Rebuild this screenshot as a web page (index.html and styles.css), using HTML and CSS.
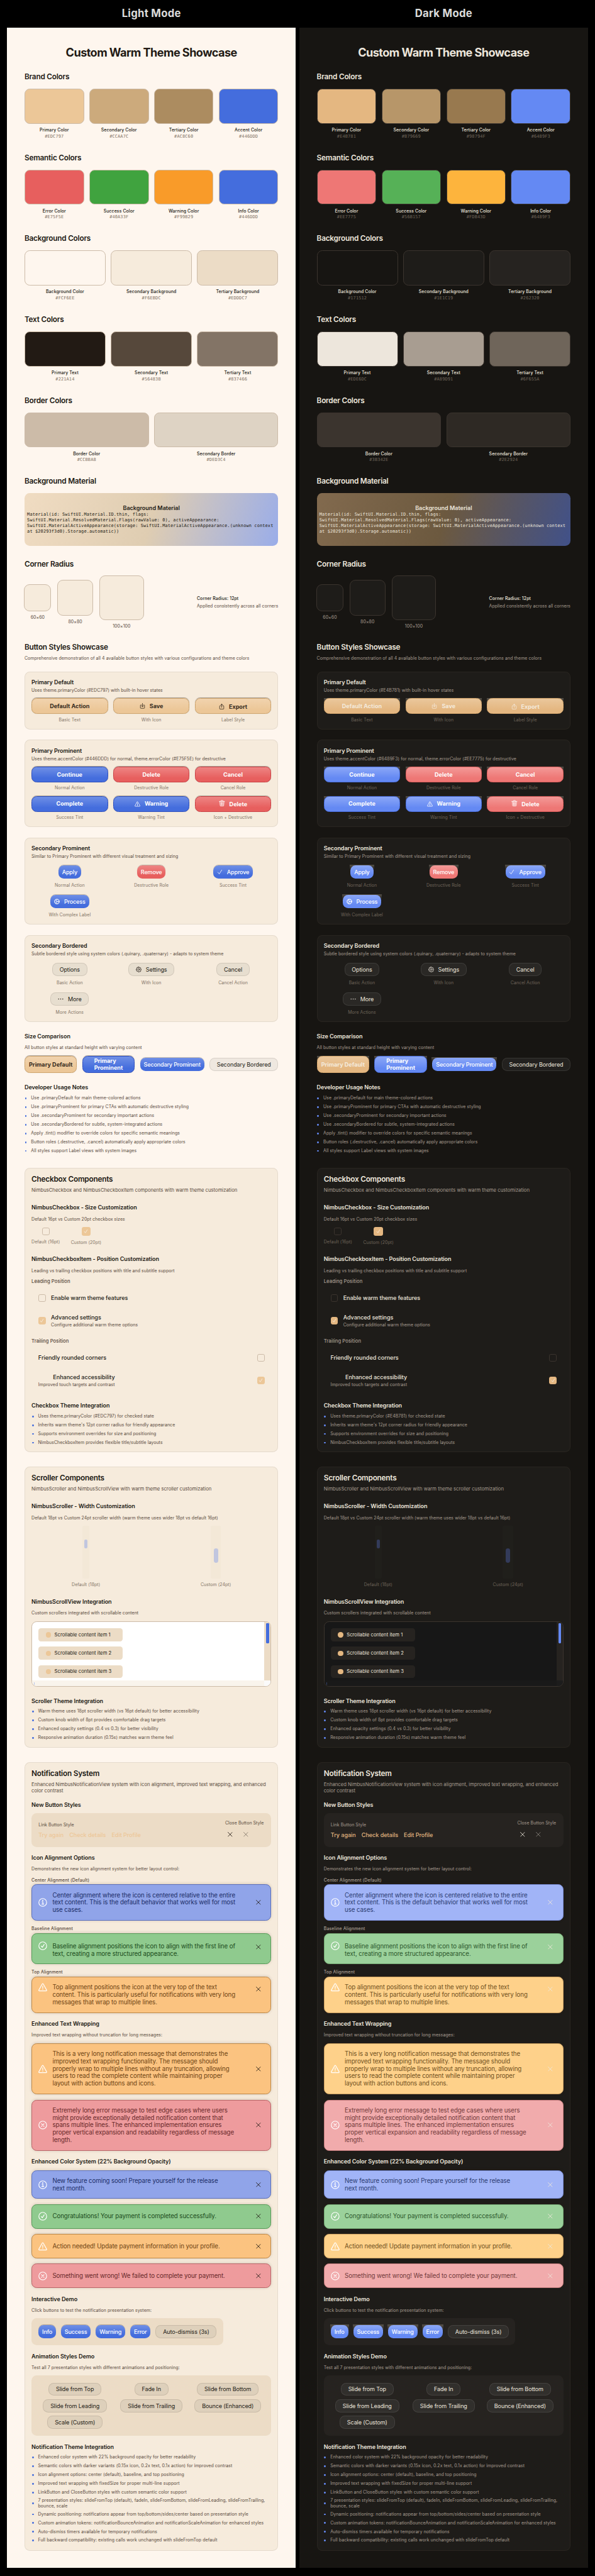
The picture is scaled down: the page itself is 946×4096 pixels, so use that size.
FILE: index.html
```html
<!DOCTYPE html>
<html lang="en">
<head>
<meta charset="utf-8">
<title>Custom Warm Theme Showcase</title>
<link rel="stylesheet" href="styles.css">
</head>
<body>
<svg class="sprite" aria-hidden="true">
  <symbol id="i-save" viewBox="0 0 16 16"><path d="M5.2 5.2H3.4a1.2 1.2 0 0 0-1.2 1.2v7a1.2 1.2 0 0 0 1.2 1.2h9.2a1.2 1.2 0 0 0 1.2-1.2v-7a1.2 1.2 0 0 0-1.2-1.2h-1.8M8 .8v9.4M5.2 7.6 8 10.4l2.8-2.8"/></symbol>
  <symbol id="i-export" viewBox="0 0 16 16"><path d="M5.2 5.6H3.4a1.2 1.2 0 0 0-1.2 1.2v7a1.2 1.2 0 0 0 1.2 1.2h9.2a1.2 1.2 0 0 0 1.2-1.2v-7a1.2 1.2 0 0 0-1.2-1.2h-1.8M8 10.4V1M5.2 3.6 8 .8l2.8 2.8"/></symbol>
  <symbol id="i-warn" viewBox="0 0 16 16"><path d="M7.1 2.1 1 12.6a1.1 1.1 0 0 0 .9 1.6h12.2a1.1 1.1 0 0 0 .9-1.6L8.9 2.1a1 1 0 0 0-1.8 0zM8 6v4M8 11.5v.9"/></symbol>
  <symbol id="i-trash" viewBox="0 0 16 16"><path d="M1 3.2h14M5.4 3V1.6a.9.9 0 0 1 .9-.9h3.4a.9.9 0 0 1 .9.9V3M2.6 3.4l.8 10.6a1.2 1.2 0 0 0 1.2 1.2h6.8a1.2 1.2 0 0 0 1.2-1.2l.8-10.6M5.7 5.6l.3 7.2M8 5.6v7.2M10.3 5.6l-.3 7.2"/></symbol>
  <symbol id="i-check" viewBox="0 0 16 16"><path d="M2.4 8.8 6.4 13.6 13.4 2.4"/></symbol>
  <symbol id="i-process" viewBox="0 0 16 16"><circle cx="8" cy="8" r="6"/><circle cx="8" cy="8" r="7.2" stroke-dasharray="1.4 2.37"/><path d="M8.8 8H14M7.6 7.3 5 2.8M7.6 8.7 5 13.2"/><circle cx="7.8" cy="8" r="1"/></symbol>
  <symbol id="i-gear" viewBox="0 0 16 16"><path d="M6.9 1h2.2l.4 1.9 1.3.6 1.7-1.1 1.5 1.6-1 1.6.5 1.3 1.9.5v2.1l-1.9.4-.6 1.4 1.1 1.6-1.6 1.6-1.6-1.1-1.3.6L9.1 15H6.9l-.4-1.9-1.4-.6-1.6 1.1-1.6-1.6 1.1-1.6-.6-1.4L.9 9.100V7l1.900-.4.6-1.400-1.100-1.600 1.600-1.600 1.600 1.100 1-.5z"/><circle cx="8" cy="8" r="2.5"/></symbol>
  <symbol id="i-more" viewBox="0 0 16 16"><g fill="currentColor" stroke="none"><circle cx="2.2" cy="8" r="1.35"/><circle cx="8" cy="8" r="1.35"/><circle cx="13.8" cy="8" r="1.35"/></g></symbol>
  <symbol id="i-x" viewBox="0 0 16 16"><path d="M1 1l14 14M15 1 1 15"/></symbol>
  <symbol id="i-info" viewBox="0 0 24 24"><circle cx="12" cy="12" r="10.7"/><path d="M10 10.300h2.400v6.200M9.500 16.700h5.400"/><circle cx="12" cy="7" r=".7" fill="currentColor"/></symbol>
  <symbol id="i-ok" viewBox="0 0 24 24"><circle cx="12" cy="12" r="10.7"/><path d="M7.900 12.600l2.900 3.600 5.300-8.200"/></symbol>
  <symbol id="i-alert" viewBox="0 0 24 24"><path d="M10.700 2.700 1.300 19.600a1.500 1.500 0 0 0 1.300 2.200h18.800a1.500 1.500 0 0 0 1.300-2.200L13.300 2.700a1.500 1.500 0 0 0-2.600 0zM12 8.500v6.200M12 17.600v.5"/></symbol>
  <symbol id="i-fail" viewBox="0 0 24 24"><circle cx="12" cy="12" r="10.7"/><path d="M8.400 8.400l7.200 7.200M15.600 8.400l-7.200 7.200"/></symbol>
</svg>

<div class="board">
  <div class="mode"><div class="mode-name">Light Mode</div><main class="panel light"></main></div>
  <div class="mode"><div class="mode-name">Dark Mode</div><main class="panel dark"></main></div>
</div>

<template id="showcase">
  <h1 class="title">Custom Warm Theme Showcase</h1>

  <section class="section"><h2 class="h2">Brand Colors</h2><div class="swatches">
    <div class="swatch" data-token="primary">Primary Color</div><div class="swatch" data-token="secondary">Secondary Color</div><div class="swatch" data-token="tertiary">Tertiary Color</div><div class="swatch" data-token="accent">Accent Color</div></div></section>
  <section class="section"><h2 class="h2">Semantic Colors</h2><div class="swatches">
    <div class="swatch" data-token="error">Error Color</div><div class="swatch" data-token="success">Success Color</div><div class="swatch" data-token="warning">Warning Color</div><div class="swatch" data-token="accent">Info Color</div></div></section>
  <section class="section"><h2 class="h2">Background Colors</h2><div class="swatches">
    <div class="swatch" data-token="bg">Background Color</div><div class="swatch" data-token="bg2">Secondary Background</div><div class="swatch" data-token="bg3">Tertiary Background</div></div></section>
  <section class="section"><h2 class="h2">Text Colors</h2><div class="swatches">
    <div class="swatch" data-token="text">Primary Text</div><div class="swatch" data-token="text2">Secondary Text</div><div class="swatch" data-token="text3">Tertiary Text</div></div></section>
  <section class="section"><h2 class="h2">Border Colors</h2><div class="swatches">
    <div class="swatch" data-token="border">Border Color</div><div class="swatch" data-token="border2">Secondary Border</div></div></section>

  <section class="section"><h2 class="h2">Background Material</h2>
    <div class="material"><div class="material-title">Background Material</div>
      <div class="material-code">Material(id: SwiftUI.Material.ID.thin, flags:<br>SwiftUI.Material.ResolvedMaterial.Flags(rawValue: 0), activeAppearance:<br>SwiftUI.MaterialActiveAppearance(storage: SwiftUI.MaterialActiveAppearance.(unknown context<br>at $20293f3d0).Storage.automatic))</div></div></section>

  <section class="section"><h2 class="h2">Corner Radius</h2>
    <div class="radii">
      <div class="radius s60"><i></i>60×60</div><div class="radius s80"><i></i>80×80</div><div class="radius s100"><i></i>100×100</div>
      <div class="radius-note"><b>Corner Radius: 12pt</b><span>Applied consistently across all corners</span></div>
    </div></section>

  <h2 class="h2">Button Styles Showcase</h2>
  <p class="note gap8">Comprehensive demonstration of all 4 available button styles with various configurations and theme colors</p>

  <section class="card gap24">
    <h3 class="h3 down">Primary Default</h3>
    <p class="note gap4">Uses theme.primaryColor (<span data-hex="primary"></span>) with built-in hover states</p>
    <div class="grid3">
      <div class="cell"><button class="btn warm">Default Action</button>Basic Text</div>
      <div class="cell"><button class="btn warm"><svg><use href="#i-save"/></svg>Save</button>With Icon</div>
      <div class="cell"><button class="btn warm low"><svg><use href="#i-export"/></svg>Export</button>Label Style</div>
    </div>
  </section>
  <section class="card gap24">
    <h3 class="h3 down">Primary Prominent</h3>
    <p class="note gap4">Uses theme.accentColor (<span data-hex="accent"></span>) for normal, theme.errorColor (<span data-hex="error"></span>) for destructive</p>
    <div class="grid3">
      <div class="cell"><button class="btn blue">Continue</button>Normal Action</div>
      <div class="cell"><button class="btn red">Delete</button>Destructive Role</div>
      <div class="cell"><button class="btn red">Cancel</button>Cancel Role</div>
      <div class="cell"><button class="btn blue">Complete</button>Success Tint</div>
      <div class="cell"><button class="btn blue"><svg><use href="#i-warn"/></svg>Warning</button>Warning Tint</div>
      <div class="cell"><button class="btn red low"><svg class="tall"><use href="#i-trash"/></svg>Delete</button>Icon + Destructive</div>
    </div>
  </section>
  <section class="card gap24">
    <h3 class="h3 down">Secondary Prominent</h3>
    <p class="note gap4">Similar to Primary Prominent with different visual treatment and sizing</p>
    <div class="grid3">
      <div class="cell"><button class="pill blue">Apply</button>Normal Action</div>
      <div class="cell"><button class="pill red">Remove</button>Destructive Role</div>
      <div class="cell"><button class="pill blue"><svg><use href="#i-check"/></svg>Approve</button>Success Tint</div>
      <div class="cell"><button class="pill blue"><svg><use href="#i-process"/></svg>Process</button>With Complex Label</div>
    </div>
  </section>
  <section class="card gap24">
    <h3 class="h3 down">Secondary Bordered</h3>
    <p class="note gap4">Subtle bordered style using system colors (.quinary, .quaternary) - adapts to system theme</p>
    <div class="grid3">
      <div class="cell"><button class="pill line">Options</button>Basic Action</div>
      <div class="cell"><button class="pill line"><svg><use href="#i-gear"/></svg>Settings</button>With Icon</div>
      <div class="cell"><button class="pill line">Cancel</button>Cancel Action</div>
      <div class="cell"><button class="pill line"><svg><use href="#i-more"/></svg>More</button>More Actions</div>
    </div>
  </section>

  <h3 class="h3 down gap24">Size Comparison</h3>
  <p class="note gap12">All button styles at standard height with varying content</p>
  <div class="sizes">
    <button class="btn warm">Primary Default</button>
    <button class="btn blue"><span>Primary<br>Prominent</span></button>
    <button class="pill blue">Secondary Prominent</button>
    <button class="pill line">Secondary Bordered</button>
  </div>

  <h3 class="h3 down gap24">Developer Usage Notes</h3>
  <ul class="list down">
    <li>Use .primaryDefault for main theme-colored actions</li>
    <li>Use .primaryProminent for primary CTAs with automatic destructive styling</li>
    <li>Use .secondaryProminent for secondary important actions</li>
    <li>Use .secondaryBordered for subtle, system-integrated actions</li>
    <li>Apply .tint() modifier to override colors for specific semantic meanings</li>
    <li>Button roles (.destructive, .cancel) automatically apply appropriate colors</li>
    <li>All styles support Label views with system images</li>
  </ul>

  <section class="card gap32">
    <h2 class="h2">Checkbox Components</h2>
    <p class="lead">NimbusCheckbox and NimbusCheckboxItem components with warm theme customization</p>
    <h3 class="h3 gap24">NimbusCheckbox - Size Customization</h3>
    <p class="note gap12">Default 16pt vs Custom 20pt checkbox sizes</p>
    <div class="checks">
      <div class="check-demo"><i class="check"></i>Default (16pt)</div>
      <div class="check-demo"><i class="check on big"><svg><use href="#i-check"/></svg></i>Custom (20pt)</div>
    </div>
    <h3 class="h3 gap24">NimbusCheckboxItem - Position Customization</h3>
    <p class="note gap12">Leading vs trailing checkbox positions with title and subtitle support</p>
    <p class="sub gap12">Leading Position</p>
    <div class="item first"><i class="check"></i><div><b>Enable warm theme features</b></div></div>
    <div class="item"><i class="check on"><svg><use href="#i-check"/></svg></i><div><b>Advanced settings</b><span>Configure additional warm theme options</span></div></div>
    <p class="sub gap11">Trailing Position</p>
    <div class="item first trailing"><div><b>Friendly rounded corners</b></div><i class="check"></i></div>
    <div class="item trailing"><div><b>Enhanced accessibility</b><span>Improved touch targets and contrast</span></div><i class="check on"><svg><use href="#i-check"/></svg></i></div>
    <h3 class="h3 down gap18">Checkbox Theme Integration</h3>
    <ul class="list down">
      <li><span>Uses theme.primaryColor (<span data-hex="primary"></span>) for checked state</span></li>
      <li>Inherits warm theme's 12pt corner radius for friendly appearance</li>
      <li>Supports environment overrides for size and positioning</li>
      <li>NimbusCheckboxItem provides flexible title/subtitle layouts</li>
    </ul>
  </section>

  <section class="card gap32">
    <h2 class="h2">Scroller Components</h2>
    <p class="lead">NimbusScroller and NimbusScrollView with warm theme scroller customization</p>
    <h3 class="h3 gap24">NimbusScroller - Width Customization</h3>
    <p class="note gap12">Default 18pt vs Custom 24pt scroller width (warm theme uses wider 18pt vs default 16pt)</p>
    <div class="scrollers">
      <div class="scroller"><div class="track"><i></i></div>Default (18pt)</div>
      <div class="scroller wide"><div class="track"><i></i></div>Custom (24pt)</div>
    </div>
    <h3 class="h3 gap24">NimbusScrollView Integration</h3>
    <p class="note gap12">Custom scrollers integrated with scrollable content</p>
    <div class="scrollview">
      <div class="rows"><div class="row"><i></i>Scrollable content item 1</div><div class="row"><i></i>Scrollable content item 2</div><div class="row"><i></i>Scrollable content item 3</div></div>
      <div class="vbar"><i></i></div>
      <div class="hbar"><i></i></div>
      <div class="corner"></div>
    </div>
    <h3 class="h3 gap24">Scroller Theme Integration</h3>
    <ul class="list">
      <li>Warm theme uses 18pt scroller width (vs 16pt default) for better accessibility</li>
      <li>Custom knob width of 8pt provides comfortable drag targets</li>
      <li>Enhanced opacity settings (0.4 vs 0.3) for better visibility</li>
      <li>Responsive animation duration (0.15s) matches warm theme feel</li>
    </ul>
  </section>

  <section class="card gap32">
    <h2 class="h2">Notification System</h2>
    <p class="lead">Enhanced NimbusNotificationView system with icon alignment, improved text wrapping, and enhanced<br>color contrast</p>
    <h3 class="h3 gap16">New Button Styles</h3>
    <div class="well links">
      <div><p class="note">Link Button Style</p><div class="link-row"><a>Try again</a><a>Check details</a><a>Edit Profile</a></div></div>
      <div><p class="note">Close Button Style</p><div class="close-row"><svg><use href="#i-x"/></svg><svg class="dim"><use href="#i-x"/></svg></div></div>
    </div>
    <h3 class="h3 gap16">Icon Alignment Options</h3>
    <p class="note gap12">Demonstrates the new icon alignment system for better layout control:</p>
    <p class="note mid gap12">Center Alignment (Default)</p>
    <div class="alert info gap4"><svg class="ico"><use href="#i-info"/></svg><p>Center alignment where the icon is centered relative to the entire<br>text content. This is the default behavior that works well for most<br>use cases.</p><svg class="x"><use href="#i-x"/></svg></div>
    <p class="note mid gap12">Baseline Alignment</p>
    <div class="alert ok gap4 baseline"><svg class="ico"><use href="#i-ok"/></svg><p>Baseline alignment positions the icon to align with the first line of<br>text, creating a more structured appearance.</p><svg class="x"><use href="#i-x"/></svg></div>
    <p class="note mid gap12">Top Alignment</p>
    <div class="alert warn gap4 top"><svg class="ico"><use href="#i-alert"/></svg><p>Top alignment positions the icon at the very top of the text<br>content. This is particularly useful for notifications with very long<br>messages that wrap to multiple lines.</p><svg class="x"><use href="#i-x"/></svg></div>
    <h3 class="h3 gap16">Enhanced Text Wrapping</h3>
    <p class="note gap12">Improved text wrapping without truncation for long messages:</p>
    <div class="alert warn gap12"><svg class="ico"><use href="#i-alert"/></svg><p>This is a very long notification message that demonstrates the<br>improved text wrapping functionality. The message should<br>properly wrap to multiple lines without any truncation, allowing<br>users to read the complete content while maintaining proper<br>layout with action buttons and icons.</p><svg class="x"><use href="#i-x"/></svg></div>
    <div class="alert fail gap12"><svg class="ico"><use href="#i-fail"/></svg><p>Extremely long error message to test edge cases where users<br>might provide exceptionally detailed notification content that<br>spans multiple lines. The enhanced implementation ensures<br>proper vertical expansion and readability regardless of message<br>length.</p><svg class="x"><use href="#i-x"/></svg></div>
    <h3 class="h3 gap16">Enhanced Color System (22% Background Opacity)</h3>
    <div class="alert info gap12"><svg class="ico"><use href="#i-info"/></svg><p>New feature coming soon! Prepare yourself for the release<br>next month.</p><svg class="x"><use href="#i-x"/></svg></div>
    <div class="alert ok gap12"><svg class="ico"><use href="#i-ok"/></svg><p>Congratulations! Your payment is completed successfully.</p><svg class="x"><use href="#i-x"/></svg></div>
    <div class="alert warn gap12"><svg class="ico"><use href="#i-alert"/></svg><p>Action needed! Update payment information in your profile.</p><svg class="x"><use href="#i-x"/></svg></div>
    <div class="alert fail gap12"><svg class="ico"><use href="#i-fail"/></svg><p>Something went wrong! We failed to complete your payment.</p><svg class="x"><use href="#i-x"/></svg></div>
    <h3 class="h3 gap16">Interactive Demo</h3>
    <p class="note gap12">Click buttons to test the notification presentation system:</p>
    <div class="well demo"><button class="pill blue">Info</button><button class="pill blue">Success</button><button class="pill blue">Warning</button><button class="pill blue">Error</button><button class="pill line">Auto-dismiss (3s)</button></div>
    <h3 class="h3 gap16">Animation Styles Demo</h3>
    <p class="note gap12">Test all 7 presentation styles with different animations and positioning:</p>
    <div class="well anim"><button class="pill line">Slide from Top</button><button class="pill line">Fade In</button><button class="pill line">Slide from Bottom</button><button class="pill line">Slide from Leading</button><button class="pill line">Slide from Trailing</button><button class="pill line">Bounce (Enhanced)</button><button class="pill line">Scale (Custom)</button></div>
    <h3 class="h3 gap16">Notification Theme Integration</h3>
    <ul class="list">
      <li>Enhanced color system with 22% background opacity for better readability</li>
      <li>Semantic colors with darker variants (0.15x icon, 0.2x text, 0.1x action) for improved contrast</li>
      <li>Icon alignment options: center (default), baseline, and top positioning</li>
      <li>Improved text wrapping with fixedSize for proper multi-line support</li>
      <li>LinkButton and CloseButton styles with custom semantic color support</li>
      <li><span>7 presentation styles: slideFromTop (default), fadeIn, slideFromBottom, slideFromLeading, slideFromTrailing,<br>bounce, scale</span></li>
      <li>Dynamic positioning: notifications appear from top/bottom/sides/center based on presentation style</li>
      <li>Custom animation tokens: notificationBounceAnimation and notificationScaleAnimation for enhanced styles</li>
      <li>Auto-dismiss timers available for temporary notifications</li>
      <li>Full backward compatibility: existing calls work unchanged with slideFromTop default</li>
    </ul>
  </section>
</template>
<script src="app.js"></script>
</body>
</html>
```
FILE: app.js
```js
// Hex labels shown for each design token, per mode.
const tokens = {
  light: {
    primary: '#EDC797', secondary: '#CCAA7C', tertiary: '#AC8C60', accent: '#446DDD',
    error: '#E75F5E', success: '#40A33F', warning: '#F99B29',
    bg: '#FCF6EE', bg2: '#F6EBDC', bg3: '#EDDDC7',
    text: '#221A14', text2: '#56483B', text3: '#837466',
    border: '#CCBBA8', border2: '#DED3C4'
  },
  dark: {
    primary: '#E4B781', secondary: '#B79669', tertiary: '#98794F', accent: '#6489F3',
    error: '#EE7775', success: '#56B157', warning: '#FDB43D',
    bg: '#171512', bg2: '#1E1C19', bg3: '#262320',
    text: '#EDE6DC', text2: '#A89D91', text3: '#6F655A',
    border: '#3B342E', border2: '#2E2924'
  }
};

for (const mode of ['light', 'dark']) {
  const panel = document.querySelector('.panel.' + mode);
  panel.append(document.getElementById('showcase').content.cloneNode(true));
  for (const el of panel.querySelectorAll('.swatch')) {
    const token = el.dataset.token;
    const chip = document.createElement('i');
    const hex = document.createElement('code');
    chip.style.background = 'var(--' + token + ')';
    hex.textContent = tokens[mode][token];
    el.prepend(chip);
    el.append(hex);
  }
  for (const el of panel.querySelectorAll('[data-hex]')) {
    el.textContent = tokens[mode][el.dataset.hex];
  }
}
```
FILE: styles.css
```css
/* 1rem is ten design points */
html { font-size: 6.957px; background: #000; }
* { box-sizing: border-box; margin: 0; padding: 0; }
body { font-family: Inter, "Liberation Sans", sans-serif; overflow-x: hidden; }
.sprite { display: none; }
svg { fill: none; stroke: currentColor; stroke-width: 1.4; stroke-linecap: round; stroke-linejoin: round; flex: none; overflow: visible; }
button { font: inherit; color: inherit; border: 0; background: none; }
i { font-style: normal; display: block; }

.board { display: flex; gap: .8rem; padding: 0 1.6rem 1.55rem; }
.mode { flex: 1; min-width: 0; }
.mode-name { height: 6.3rem; line-height: 6.2rem; text-align: center; color: #dcdcdc; font-size: 2.4rem; font-weight: 700; letter-spacing: .017em; }
.panel { padding: 4rem; background: var(--bg); color: var(--text); }

.light {
  --primary: #ecc798; --secondary: #ccaa7c; --tertiary: #ac8c60; --accent: #446ddd;
  --error: #e75f5e; --success: #40a33f; --warning: #f99b29;
  --bg: #fef6ee; --bg2: #f6ebdc; --bg3: #ecdcc6;
  --text: #221a14; --text2: #56483b; --text3: #837466;
  --border: #ccbba8; --border2: #ded3c4;
  --primary-hi: #f1d3ae; --accent-hi: #6f8fe6; --error-hi: #ee8584;
  --primary-edge: #cfa56e; --accent-edge: #2d4fc0; --error-edge: #cc4045;
  --cap: rgba(60, 50, 40, .42); --cap-corner: rgba(255, 255, 255, 0);
  --on-warm: #362b20; --line-bg: rgba(60, 70, 50, .075); --line-edge: rgba(60, 50, 40, .13);
  --view: #fff; --hbar: #f9f4ec; --track: #f3e8d7; --knob: #c1c6df;
  --info-bg: #90a4e9; --info-edge: #5a6fba; --info-text: #1b2c66;
  --ok-bg: #8fca8e; --ok-edge: #569a57; --ok-text: #1a4a1a;
  --warn-bg: #fbc380; --warn-edge: #bd894a; --warn-text: #6e4413;
  --fail-bg: #ee9b9d; --fail-edge: #b96568; --fail-text: #672829;
}
.dark {
  --primary: #e4b781; --secondary: #b79669; --tertiary: #98794f; --accent: #6489f3;
  --error: #ee7775; --success: #56b157; --warning: #fdb43d;
  --bg: #171512; --bg2: #1e1c19; --bg3: #262320;
  --text: #ede6dc; --text2: #a89d91; --text3: #6f655a;
  --border: #3b342e; --border2: #2e2924;
  --primary-hi: #eac79c; --accent-hi: #8ba7f7; --error-hi: #f39997;
  --primary-edge: #d9aa70; --accent-edge: #4a6fe0; --error-edge: #dd5c5b;
  --cap: rgba(150, 140, 125, .1); --cap-corner: rgba(140, 132, 120, .5);
  --on-warm: #f4eadc; --line-bg: rgba(255, 255, 255, .055); --line-edge: rgba(255, 255, 255, .09);
  --view: #171717; --hbar: #191919; --track: #201f1b; --knob: #333b5a;
  --info-bg: #a1b4f7; --info-edge: #7488d0; --info-text: #2b3b70;
  --ok-bg: #9bd19b; --ok-edge: #74a874; --ok-text: #2b572b;
  --warn-bg: #fed18a; --warn-edge: #cba062; --warn-text: #6f5020;
  --fail-bg: #f1abac; --fail-edge: #c47c7e; --fail-text: #70393a;
}

.gap4 { margin-top: .4rem; } .gap8 { margin-top: .8rem; } .gap11 { margin-top: 1.1rem; }
.gap12 { margin-top: 1.2rem; } .gap16 { margin-top: 1.6rem; } .gap18 { margin-top: 1.8rem; }
.gap24 { margin-top: 2.4rem; } .gap32 { margin-top: 3.2rem; }

.title { font-size: 2.6rem; line-height: 3.2rem; font-weight: 700; text-align: center; margin-bottom: 3.05rem; letter-spacing: -.0305em; white-space: nowrap; }
.h2 { font-size: 1.7rem; line-height: 2.1rem; font-weight: 600; letter-spacing: -.0195em; }
.h3 { font-size: 1.3rem; line-height: 1.6rem; font-weight: 600; white-space: nowrap; letter-spacing: -.0083em; }
.h3.down { line-height: 1.8rem; margin-bottom: -.2rem; }
.note { font-size: 1rem; line-height: 1.3rem; color: var(--text2); white-space: nowrap; letter-spacing: .0107em; }
.note.mid { font-weight: 500; letter-spacing: .018em; }
.lead { font-size: 1.1rem; line-height: 1.4rem; color: var(--text2); margin-top: .8rem; white-space: nowrap; letter-spacing: .0033em; }
.sub { font-size: 1.1rem; line-height: 1.4rem; font-weight: 500; color: var(--text2); letter-spacing: .009em; }
.section { margin-bottom: 3.2rem; }
.section > .h2 { margin-bottom: 1.6rem; }

.swatches { display: flex; gap: 1.2rem; }
.swatch { flex: 1; text-align: center; font-size: 1rem; line-height: 1.3rem; font-weight: 500; letter-spacing: .0117em; white-space: nowrap; }
.swatch i { height: 8rem; border-radius: 1.2rem; border: 1px solid var(--border); margin-bottom: .8rem; }
.swatch code { display: block; margin-top: .2rem; font: 1rem/1.3rem "DejaVu Sans Mono", monospace; color: var(--text3); letter-spacing: .0178em; }

.material { height: 12rem; border-radius: 1.2rem; padding: 2.5rem .6rem 0; background: linear-gradient(107deg, #f0dcc2, #dfcdb2 50%, #9aade9); }
.dark .material { background: linear-gradient(107deg, #826a4e, #6c593f 50%, #415189); }
.material-title { font-size: 1.3rem; line-height: 1.8rem; font-weight: 600; text-align: center; }
.material-code { font: 1rem/1.3rem "DejaVu Sans Mono", monospace; white-space: nowrap; letter-spacing: .0178em; }

.radii { display: flex; align-items: center; gap: 1.6rem; height: 12.1rem; }
.radius { font-size: 1rem; line-height: 1.3rem; text-align: center; color: var(--text2); letter-spacing: .0107em; }
.radius i { border: .2rem solid var(--border); border-radius: 1.3rem; background: var(--bg2); margin: -.1rem -.1rem .7rem; }
.s60 { width: 6rem; } .s60 i { height: 6.2rem; }
.s80 { width: 8rem; } .s80 i { height: 8.2rem; }
.s100 { width: 10rem; } .s100 i { height: 10.2rem; }
.radius-note { margin-left: auto; font-size: 1rem; line-height: 1.3rem; color: var(--text2); letter-spacing: .0107em; white-space: nowrap; }
.radius-note b { display: block; font-weight: 500; color: var(--text); margin-bottom: .4rem; }

.card { border: 1px solid color-mix(in srgb, var(--border2) 70%, transparent); border-radius: 1.2rem; background: var(--bg2); padding: calc(1.6rem - 1px); }
.grid3 { display: grid; grid-template-columns: repeat(3, minmax(0, 1fr)); gap: 1.2rem; margin-top: 1.2rem; }
.cell { display: flex; flex-direction: column; align-items: center; font-size: 1rem; line-height: 1.3rem; color: var(--text3); letter-spacing: .0107em; isolation: isolate; }

.btn { position: relative; display: flex; align-items: center; justify-content: center; gap: 1rem; width: 100%; height: 3.6rem; margin-bottom: .6rem; border: 1px solid; border-radius: 1.2rem; font-size: 1.3rem; line-height: 1.6rem; font-weight: 700; letter-spacing: .0026em; color: #fff; box-shadow: 0 -.1rem .1rem var(--cap); }
.btn svg, .pill svg { width: 1.3rem; height: 1.3rem; }
.btn svg.tall { height: 1.5rem; width: 1.4rem; margin-top: -.4rem; }
.btn.low { padding-top: .2rem; }
.btn.warm { background: linear-gradient(var(--primary-hi), var(--primary) 75%); border-color: var(--primary-edge); color: var(--on-warm); }
.blue { background: linear-gradient(var(--accent-hi), var(--accent) 75%); border-color: var(--accent-edge); color: #fff; }
.red { background: linear-gradient(var(--error-hi), var(--error) 75%); border-color: var(--error-edge); color: #fff; }
.pill { position: relative; display: flex; align-items: center; justify-content: center; gap: 1rem; height: 3rem; padding: 0 .85rem; border-radius: 1.2rem; font-size: 1.3rem; line-height: 1.6rem; font-weight: 500; letter-spacing: -.0179em; white-space: nowrap; box-shadow: 0 -.1rem .1rem var(--cap); }
/* square-cornered glow behind the top edge of filled buttons */
.btn::before, .pill:not(.line)::before { content: ""; position: absolute; z-index: -1; inset: -1px -1px auto; height: 1.2rem; background: linear-gradient(var(--cap-corner), transparent); }
.cell .pill { margin: .3rem 0 .9rem; }
.pill.line { border: 1px solid var(--line-edge); background: var(--line-bg); color: var(--text); padding: 0 1.55rem; font-weight: 400; letter-spacing: -.0133em; box-shadow: none; }
.sizes { display: flex; align-items: center; gap: 1.2rem; margin-top: 1.2rem; isolation: isolate; }
.sizes .btn { width: 12rem; height: 4rem; margin: 0; text-align: left; white-space: nowrap; }
.sizes .pill.blue { width: 14.7rem; }
.sizes .pill.line { flex: 1; padding: 0; }

.list { list-style: none; display: grid; gap: .4rem; margin-top: .8rem; font-size: 1rem; line-height: 1.3rem; color: var(--text2); letter-spacing: .0107em; white-space: nowrap; }
.list.down { margin: .9rem 0 -.1rem; }
.list li { display: flex; align-items: center; min-height: 1.6rem; }
.list li::before { content: ""; flex: none; width: .4rem; height: .4rem; margin: .2rem 1rem 0 .1rem; border-radius: 50%; background: var(--accent); }

.checks { display: flex; align-items: center; gap: 2.5rem; margin-top: 1.2rem; height: 4.1rem; }
.check-demo { font-size: 1rem; line-height: 1.3rem; color: var(--text3); letter-spacing: .0107em; }
.check-demo .check { margin: 0 auto .8rem; }
.check { width: 1.7rem; height: 1.7rem; border: 1px solid var(--border); border-radius: .4rem; display: flex; align-items: center; justify-content: center; flex: none; }
.check.on { background: var(--primary); border-color: var(--primary); color: #fff; }
.check svg { width: 1rem; height: 1.1rem; }
.check.big { width: 2.1rem; height: 2.1rem; }
.item { display: flex; align-items: center; gap: 1.2rem; height: 6rem; padding: 0 1.55rem; font-size: 1rem; line-height: 1.3rem; color: var(--text2); letter-spacing: .0107em; }
.item.first { height: 4.4rem; margin-top: .8rem; }
.item b { display: block; font-size: 1.3rem; line-height: 1.6rem; font-weight: 500; letter-spacing: -.0044em; color: var(--text); }
.item span { display: block; margin-top: .2rem; }
.item.trailing { justify-content: space-between; text-align: right; }

.scrollers { display: flex; justify-content: space-between; margin-top: 1.2rem; padding: 0 9.2rem; }
.scroller { font-size: 1rem; line-height: 1.3rem; color: var(--text3); letter-spacing: .0107em; }
.track { width: 1.65rem; height: 12rem; margin: 0 auto .8rem; padding-top: 3.1rem; border-radius: .3rem; background: var(--track); }
.track i { width: .65rem; height: 2rem; margin: 0 auto; border-radius: .3rem; background: var(--knob); }
.wide .track { width: 2.4rem; padding-top: 5.2rem; }
.wide .track i { width: 1rem; height: 3.2rem; border-radius: .5rem; }

.scrollview { display: grid; grid-template: 13.4rem 1fr / 1fr 1.45rem; height: 15rem; margin-top: 1.2rem; border: 1px solid var(--border); border-radius: 1.2rem; overflow: hidden; background: var(--view); }
.rows { padding: 1.5rem; display: grid; gap: 1.2rem; align-content: start; }
.row { display: flex; align-items: center; gap: .8rem; width: 19.2rem; height: 3rem; padding: 0 1.6rem; border-radius: .6rem; background: var(--bg3); font-size: 1.1rem; letter-spacing: .0069em; white-space: nowrap; }
.row i { width: 1.2rem; height: 1.2rem; border-radius: 50%; background: var(--primary); }
.vbar { background: var(--bg3); padding: .4rem 0 0 .4rem; }
.vbar i { width: .65rem; height: 4.6rem; border-radius: .2rem; background: var(--accent); }
.hbar { background: var(--hbar); padding: .4rem; }
.hbar i { width: .2rem; height: .6rem; background: color-mix(in srgb, var(--accent) 35%, transparent); }
.corner { background: color-mix(in srgb, var(--view) 96%, #888); }

.well { margin-top: 1.2rem; border-radius: 1.2rem; background: var(--bg3); padding: 1.6rem; }
.links { display: flex; justify-content: space-between; align-items: center; height: 7.7rem; }
.link-row { display: flex; gap: 1.3rem; margin-top: .8rem; font-size: 1.3rem; line-height: 1.6rem; font-weight: 500; letter-spacing: -.0031em; color: var(--primary); }
.close-row { display: flex; gap: 2.5rem; align-items: center; height: 2.4rem; margin-top: .8rem; padding-left: .6rem; color: var(--text); }
.close-row svg, .x { width: 1.1rem; height: 1.1rem; stroke-width: 1.8; }
.links .note { padding-right: .1rem; }
.dim { opacity: .5; }
.demo { display: flex; gap: 1.15rem; width: 43.8rem; height: 6.2rem; isolation: isolate; }
.anim { display: grid; grid-template-columns: repeat(3, minmax(0, 1fr)); gap: .8rem; justify-items: center; height: 13.8rem; }

.alert { display: flex; align-items: center; padding: calc(1.6rem - 1px) 2.3rem calc(1.6rem - 1px) calc(1.6rem - 1px); min-height: 5.6rem; border: 1px solid; border-radius: 1.2rem; font-size: 1.4rem; line-height: 1.7rem; letter-spacing: -.0103em; white-space: nowrap; box-shadow: 0 -.1rem .6rem rgba(60, 40, 20, .16); }
.alert .ico { width: 2rem; height: 2rem; margin-right: 1.2rem; color: #fff; stroke-width: 2; }
.alert .x { margin-left: auto; color: var(--text); }
.alert.baseline { height: 7rem; align-items: flex-start; padding-top: 2rem; }
.baseline .ico { margin-top: -.3rem; }
.baseline .x { margin-top: .4rem; }
.alert.top { align-items: flex-start; }
.top .ico { margin-top: -.2rem; }
.top .x { margin-top: .7rem; }
.info { background: var(--info-bg); border-color: var(--info-edge); color: var(--info-text); }
.ok { background: var(--ok-bg); border-color: var(--ok-edge); color: var(--ok-text); }
.warn { background: var(--warn-bg); border-color: var(--warn-edge); color: var(--warn-text); }
.fail { background: var(--fail-bg); border-color: var(--fail-edge); color: var(--fail-text); }
```
